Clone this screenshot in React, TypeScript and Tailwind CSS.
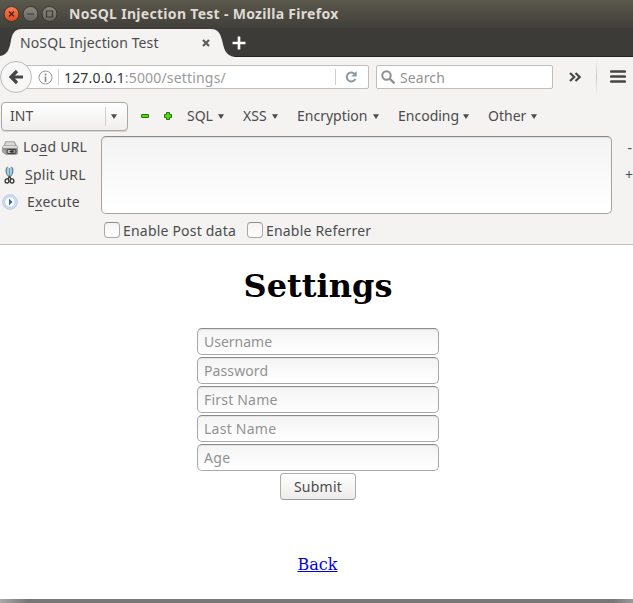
import type { ReactNode } from "react";

function Caret({ className = "" }: { className?: string }) {
  return (
    <svg className={`shrink-0 ${className}`} width="6" height="5" viewBox="0 0 6 5">
      <path d="M0 .200h6L3 4.900z" fill="#4a4a4a" />
    </svg>
  );
}

function MenuItem({ label, width }: { label: string; width: string }) {
  return (
    <button className={`flex shrink-0 items-center justify-between ${width}`}>
      <span>{label}</span>
      <Caret />
    </button>
  );
}

function CheckItem({ label }: { label: string }) {
  return (
    <label className="flex items-center gap-[3px]">
      <span className="h-4 w-4 rounded-[4px] border border-[#a9a8a5] border-t-[#8f8e8b] bg-linear-to-b from-[#f4f4f4] to-white" />
      <span className="whitespace-nowrap pt-0.5 tracking-[0.2px]">{label}</span>
    </label>
  );
}

function Action({ icon, children, gap }: { icon: ReactNode; children: ReactNode; gap: string }) {
  return (
    <button className={`flex h-[27.5px] items-center whitespace-nowrap tracking-[0.25px] ${gap}`}>
      {icon}
      <span>{children}</span>
    </button>
  );
}

const underline = "underline decoration-1 underline-offset-[3px]";

const fields = [
  { label: "Username", spacing: "tracking-[0px]" },
  { label: "Password", spacing: "tracking-[0.1px]" },
  { label: "First Name", spacing: "tracking-[0.2px]" },
  { label: "Last Name", spacing: "tracking-[0.25px]" },
  { label: "Age", spacing: "tracking-[0.3px]" },
];

function TitleBar() {
  return (
    <div className="flex h-7 items-center bg-linear-to-b from-[#5b584c] to-[#403f3a] pl-[3px]">
      <svg className="-mt-px" width="56" height="18" viewBox="0 0 56 18" fill="none">
        <defs>
          <linearGradient id="close" x1="0" y1="0" x2="0" y2="1">
            <stop stopColor="#f58059" />
            <stop offset="1" stopColor="#df4a1b" />
          </linearGradient>
          <linearGradient id="plain" x1="0" y1="0" x2="0" y2="1">
            <stop stopColor="#8b8982" />
            <stop offset="1" stopColor="#66645e" />
          </linearGradient>
        </defs>
        <circle cx="8.5" cy="9" r="7.5" fill="url(#close)" stroke="#38352f" />
        <circle cx="27.5" cy="9" r="7.5" fill="url(#plain)" stroke="#38352f" />
        <circle cx="46.5" cy="9" r="7.5" fill="url(#plain)" stroke="#38352f" />
        <path d="m6 6.5 5 5m0-5-5 5" stroke="#472018" strokeWidth="1.3" />
        <path d="M24 9h7M43.5 6h6v6h-6z" stroke="#3b3934" strokeWidth="1.2" />
      </svg>
      <h1 className="ml-[10px] whitespace-nowrap text-[14px] font-bold leading-none tracking-[0.3px] text-[#dfdbd2]">
        NoSQL Injection Test - Mozilla Firefox
      </h1>
    </div>
  );
}

function TabStrip() {
  return (
    <div className="relative flex h-[29px] items-center border-b border-[#252421] bg-[#3c3b37]">
      <svg className="absolute left-0 top-0" width="236" height="29" viewBox="0 0 236 29">
        <path d="M0 29v-1C7 27 9 22 10.500 15 12 6 14 1 22 1H211c7 0 9 4 11 11 2 8 3 16 13 17z" fill="#f4f3f2" />
      </svg>
      <div className="relative ml-5 flex w-[190px] items-center justify-between pt-px text-[#4c4c4c]">
        <span className="whitespace-nowrap pt-px tracking-[0.12px]">NoSQL Injection Test</span>
        <svg width="8" height="8" viewBox="0 0 8 8">
          <path d="m1 1 6 6m0-6L1 7" stroke="#5d5d5d" strokeWidth="2.200" />
        </svg>
      </div>
      <svg className="relative ml-[22px] mt-px" width="14" height="14" viewBox="0 0 14 14">
        <path d="M7 .5v13M.5 7h13" stroke="white" strokeWidth="2.600" />
      </svg>
    </div>
  );
}

function NavBar() {
  return (
    <div className="flex h-10 items-center">
      <div className="z-10 grid h-8 w-8 shrink-0 place-items-center rounded-full border border-[#bdbbb8] bg-[#f8f7f7]">
        <svg width="16" height="16" viewBox="0 0 16 16" fill="none">
          <path d="M15 8H4M9 2 3 8l6 6" stroke="#464646" strokeWidth="3.200" />
        </svg>
      </div>
      <div className="-ml-4 flex h-6 w-[353px] shrink-0 items-center rounded-r-[2px] border border-[#c0beba] bg-white pl-[21px]">
        <svg width="15" height="15" viewBox="0 0 15 15" fill="none">
          <circle cx="7.500" cy="7.500" r="6.500" stroke="#979797" />
          <path d="M7.500 3.500v2M7.500 6.500V12" stroke="#8b8b8b" strokeWidth="1.700" />
        </svg>
        <span className="ml-[5px] h-4 w-px bg-[#cfcfcf]" />
        <span className="ml-[5px] w-[271px] whitespace-nowrap pt-0.5 tracking-[0.17px] text-[#9a9a9a]">
          <span className="text-[#333]">127.0.0.1</span>:5000/settings/
        </span>
        <span className="h-4 w-px shrink-0 bg-[#cfcfcf]" />
        <svg className="ml-[9px] shrink-0" width="12" height="12" viewBox="0 0 12 12" fill="none">
          <path d="M9.500 2.800A4.500 4.500 0 1 0 10.300 8" stroke="#8a98a8" strokeWidth="2" />
          <path d="M11.700 0v5.500H6.200z" fill="#8a98a8" />
        </svg>
      </div>
      <div className="ml-[7px] flex h-6 w-[177px] shrink-0 items-center rounded-[2px] border border-[#c0beba] bg-white pl-[4px] text-[#939393]">
        <svg width="15" height="15" viewBox="0 0 15 15" fill="none">
          <circle cx="5.500" cy="5.500" r="4.200" stroke="#8f8f8f" strokeWidth="2" />
          <path d="m8.500 8.500 5 4.800" stroke="#8f8f8f" strokeWidth="2.400" />
        </svg>
        <span className="ml-1 pt-0.5 tracking-[0.1px]">Search</span>
      </div>
      <svg className="ml-4 shrink-0" width="13" height="10" viewBox="0 0 13 10" fill="none">
        <path d="m1 1 4.200 4L1 9m5.500-8 4.200 4-4.200 4" stroke="#464646" strokeWidth="2.200" />
      </svg>
      <span className="ml-[14px] h-9 w-px bg-linear-to-b from-transparent via-[#c9c8c6] to-transparent" />
      <svg className="-mt-px ml-[13px] shrink-0" width="16" height="13" viewBox="0 0 16 13">
        <path d="M1.300 1.500h13.400M1.300 6.500h13.400M1.300 11.500h13.400" stroke="#464646" strokeWidth="2.700" strokeLinecap="round" />
      </svg>
    </div>
  );
}

function HackBar() {
  return (
    <>
      <div className="flex h-[38px] items-center pl-px">
        <div className="flex h-[29px] w-[127px] items-center rounded-[4px] border border-[#aaa8a5] bg-linear-to-b from-white to-[#f0efee] pl-2 shadow-[0_1px_0_#d5d4d2]">
          <span className="w-[95px]">INT</span>
          <span className="h-[19px] w-px bg-[#d2d0ce]" />
          <Caret className="ml-[5px]" />
        </div>
        <svg className="ml-[13px]" width="8" height="4" viewBox="0 0 8 4">
          <rect x=".5" y=".5" width="7" height="3" rx=".3" fill="#56da0b" stroke="#24780b" />
        </svg>
        <svg className="ml-[15px] mr-[15px]" width="8" height="8" viewBox="0 0 8 8">
          <path d="M2.500.5h3v2h2v3h-2v2h-3v-2h-2v-3h2z" fill="#56da0b" stroke="#24780b" strokeLinejoin="round" />
        </svg>
        <div className="flex gap-[19px]">
          <MenuItem label="SQL" width="w-[37px]" />
          <MenuItem label="XSS" width="w-[35px]" />
          <MenuItem label="Encryption" width="w-[82px]" />
          <MenuItem label="Encoding" width="w-[71px]" />
          <MenuItem label="Other" width="w-[49px]" />
        </div>
      </div>
      <div className="flex h-[110px] border-b border-[#bfbebc]">
        <div className="-mt-[1.5px] w-[101px] pl-[2px]">
          <Action gap="gap-[5px]" icon={
            <svg className="mt-0.5" width="16" height="15" viewBox="0 0 16 15" fill="none">
              <path d="M3.500.8h9L14 4l1.700 2v6l-1 1.500H4L.4 11V6L2.500 4z" fill="#a3a3a3" stroke="#929292" strokeWidth=".8" />
              <path d="M4 1.300h8.200l.8 3H3z" fill="#d9d9d9" />
              <path d="M1 6h14" stroke="#ececec" strokeWidth="1.500" />
              <path d="M1 8h14" stroke="#777" />
              <rect x="5" y="8.500" width="6" height="4" rx="1.500" fill="#ccc" stroke="#444" strokeWidth="1.200" />
              <rect x="9" y="8.500" width="5" height="4" rx="1.500" stroke="#444" strokeWidth="1.200" />
              <path d="M7.500 10.500h4" stroke="#333" strokeWidth="1.200" />
            </svg>
          }>
            Lo<span className={underline}>a</span>d URL
          </Action>
          <Action gap="gap-[7px]" icon={
            <svg width="16" height="18" viewBox="0 0 16 18" fill="none">
              <path d="M5.500.8C3.700 3 3.700 7 5.500 9l2 2.500M9.500.8c1.800 2.200 1.800 6.200 0 8.200l-2 2.500" stroke="#4d8294" strokeWidth="1.200" />
              <path d="M6 1.500V9M9 1.500V9" stroke="#8fb9c8" strokeWidth="1.300" />
              <path d="M7.500 2v9" stroke="#4d8294" strokeWidth=".8" />
              <ellipse cx="5" cy="15" rx="1.900" ry="2.100" stroke="#333" strokeWidth="1.300" />
              <ellipse cx="10" cy="15" rx="1.900" ry="2.100" stroke="#333" strokeWidth="1.300" />
              <path d="m5.700 13 1.800-2 1.800 2" stroke="#333" strokeWidth="1.200" />
            </svg>
          }>
            <span className={underline}>S</span>plit URL
          </Action>
          <Action gap="gap-[9px]" icon={
            <svg width="16" height="16" viewBox="0 0 16 16">
              <circle cx="8" cy="8" r="7.300" fill="#d5e3f5" stroke="#b4c9e5" />
              <circle cx="8" cy="8" r="5.300" fill="white" stroke="#a9c2e2" strokeWidth=".8" />
              <path d="M7 4.500 10.500 8 7 11.500z" fill="#2f6bb3" />
            </svg>
          }>
            E<span className={underline}>x</span>ecute
          </Action>
        </div>
        <div className="w-[511px] pt-px">
          <div className="h-[78px] rounded-[5px] border border-[#a5a4a1] border-t-[#8c8b89] bg-linear-to-b from-[#f3f3f3] to-white shadow-[inset_0_1px_1px_#dedede]" />
          <div className="mt-2 flex h-4 items-center gap-[11px] pl-[3px]">
            <CheckItem label="Enable Post data" />
            <CheckItem label="Enable Referrer" />
          </div>
        </div>
        <div className="-mt-px flex w-[21px] flex-col items-end leading-[27px]">
          <span className="mr-[1px]">-</span>
          <span>+</span>
        </div>
      </div>
    </>
  );
}

export default function App() {
  return (
    <div className="flex h-[603px] w-[633px] flex-col overflow-hidden bg-[#f4f3f2] font-['Noto_Sans',sans-serif] text-[14px] leading-5 text-[#4c4c4c]">
      <TitleBar />
      <TabStrip />
      <NavBar />
      <HackBar />
      <main className="flex h-[354px] flex-col items-center bg-white pl-[3px]">
        <h2 className="mt-[22px] h-[38px] font-['DejaVu_Serif',serif] text-[32px] font-bold leading-[38px] text-black">Settings</h2>
        <form className="mt-[23px] flex flex-col items-center gap-[2px]">
          {fields.map((f) => (
            <div key={f.label} className="flex h-[27px] w-[242px] items-center rounded-[5px] border border-[#a8a8a8] border-t-[#8c8c8c] bg-linear-to-b from-[#f4f4f4] to-white pl-[6px] text-[#929292] shadow-[inset_0_1px_1px_#e3e3e3]">
              <span className={f.spacing}>{f.label}</span>
            </div>
          ))}
          <button type="button" className="h-[27px] w-[76px] rounded-[4px] border border-[#afadab] border-b-[#9c9a98] bg-linear-to-b from-white to-[#edecea] tracking-[0.25px]">
            Submit
          </button>
        </form>
        <a href="#" className="mr-px mt-[55px] font-['DejaVu_Serif',serif] text-[16px] leading-5 text-[#0000ee] underline">Back</a>
      </main>
      <div className="flex h-1 justify-between bg-[#777]">
        <span className="w-7 bg-linear-to-r from-[#aaa] to-[#777]" />
        <span className="w-5 bg-linear-to-l from-[#999] to-[#777]" />
      </div>
    </div>
  );
}
